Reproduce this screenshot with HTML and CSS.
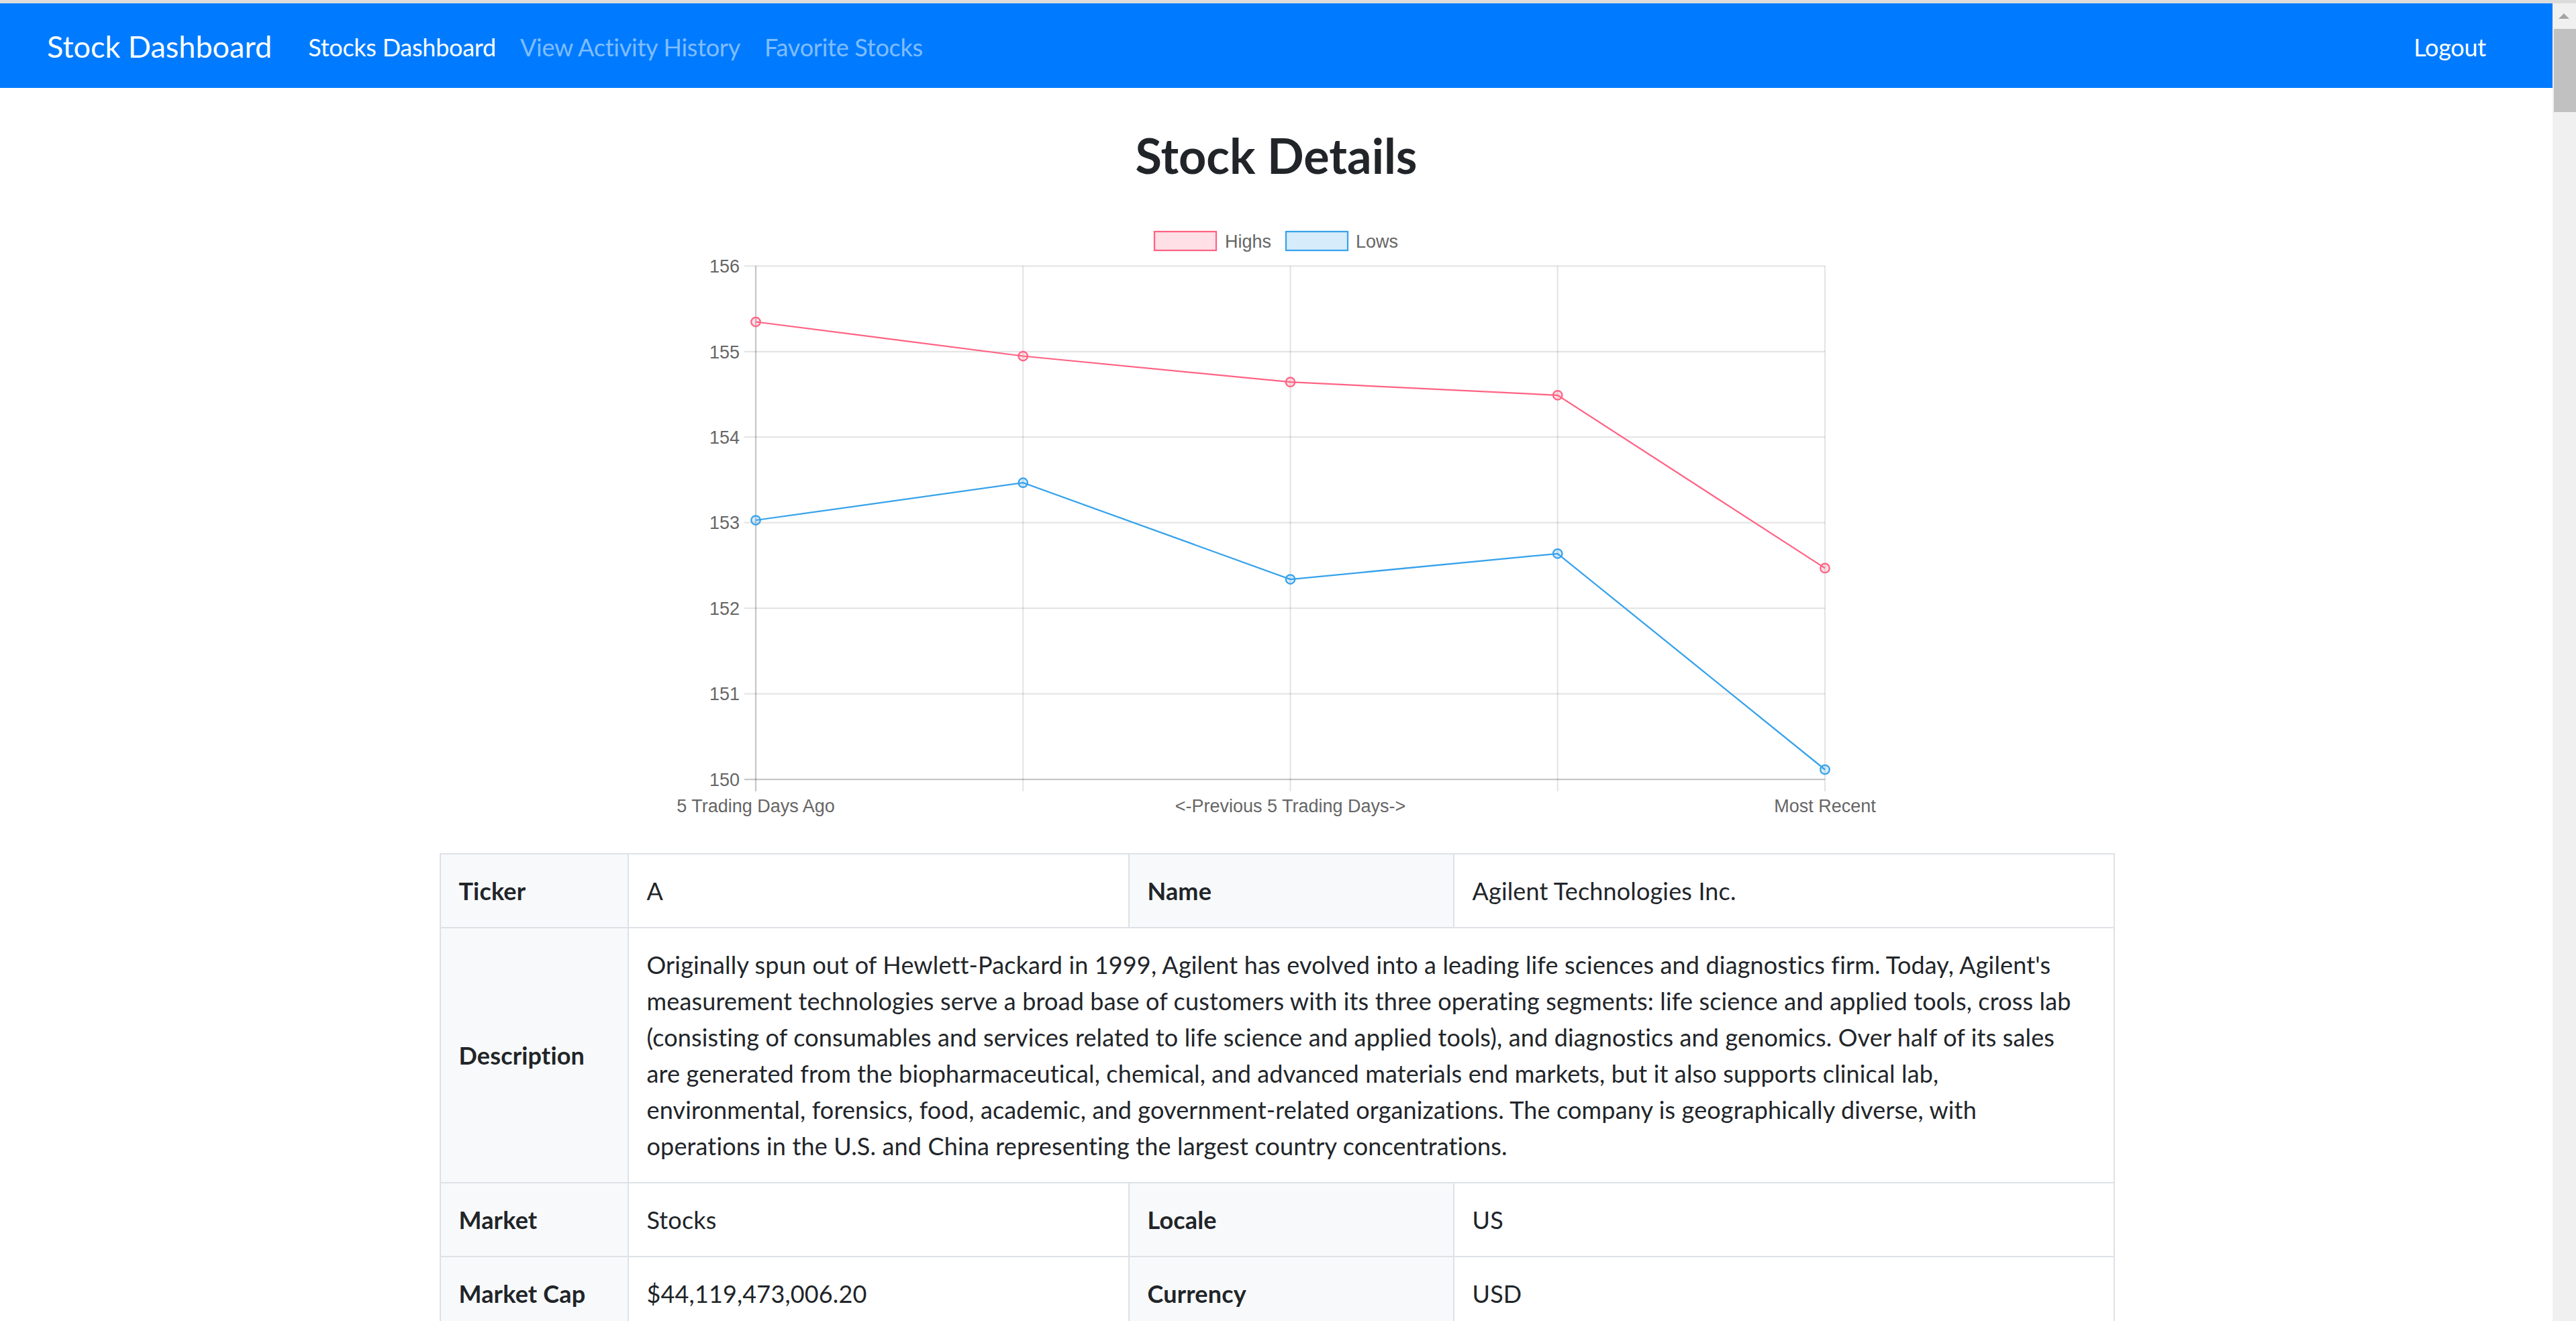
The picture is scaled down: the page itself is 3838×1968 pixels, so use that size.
FILE: index.html
```html
<!DOCTYPE html>
<html lang="en">
<head>
<meta charset="utf-8">
<title>Stock Details</title>
<link rel="stylesheet" href="styles.css">
</head>
<body>
<nav class="navbar">
  <div class="navbar-inner">
    <a class="brand" href="#">Stock Dashboard</a>
    <a class="nav-link active" href="#">Stocks Dashboard</a>
    <a class="nav-link" href="#">View Activity History</a>
    <a class="nav-link" href="#">Favorite Stocks</a>
    <a class="nav-link logout" href="#">Logout</a>
  </div>
</nav>

<main class="container">
  <h2 class="title">Stock Details</h2>

  <svg class="chart" width="1900" height="905" viewBox="0 0 1900 905" xmlns="http://www.w3.org/2000/svg">
    <!-- legend -->
    <rect x="768" y="25" width="92" height="28" fill="rgba(255,99,132,0.2)" stroke="rgb(255,99,132)" stroke-width="2.25"/>
    <text x="873" y="48.5" class="lbl">Highs</text>
    <rect x="964" y="25" width="92" height="28" fill="rgba(54,162,235,0.2)" stroke="rgb(54,162,235)" stroke-width="2.25"/>
    <text x="1068" y="48.5" class="lbl">Lows</text>

    <!-- horizontal grid -->
    <g stroke="rgba(0,0,0,0.1)" stroke-width="2.25">
      <line x1="157" y1="76.3" x2="1767" y2="76.3"/>
      <line x1="157" y1="203.75" x2="1767" y2="203.75"/>
      <line x1="157" y1="331.2" x2="1767" y2="331.2"/>
      <line x1="157" y1="458.65" x2="1767" y2="458.65"/>
      <line x1="157" y1="586.1" x2="1767" y2="586.1"/>
      <line x1="157" y1="713.55" x2="1767" y2="713.55"/>
    </g>
    <!-- vertical grid -->
    <g stroke="rgba(0,0,0,0.1)" stroke-width="2.25">
      <line x1="572.25" y1="76.3" x2="572.25" y2="859"/>
      <line x1="970.5" y1="76.3" x2="970.5" y2="859"/>
      <line x1="1368.75" y1="76.3" x2="1368.75" y2="859"/>
      <line x1="1767" y1="76.3" x2="1767" y2="859"/>
    </g>
    <g stroke="rgba(0,0,0,0.22)" stroke-width="2.25">
      <line x1="157" y1="841" x2="1767" y2="841"/>
      <line x1="174" y1="76.3" x2="174" y2="859"/>
    </g>

    <!-- y labels -->
    <g class="lbl" text-anchor="end">
      <text x="150" y="86">156</text>
      <text x="150" y="213.5">155</text>
      <text x="150" y="341">154</text>
      <text x="150" y="468.4">153</text>
      <text x="150" y="595.8">152</text>
      <text x="150" y="723.3">151</text>
      <text x="150" y="850.7">150</text>
    </g>
    <!-- x labels -->
    <g class="lbl" text-anchor="middle">
      <text x="174" y="890">5 Trading Days Ago</text>
      <text x="970.5" y="890">&lt;-Previous 5 Trading Days-&gt;</text>
      <text x="1767" y="890">Most Recent</text>
    </g>

    <!-- Highs -->
    <polyline fill="none" stroke="rgb(255,99,132)" stroke-width="2.25" points="174,159.5 572.25,210.5 970.5,249.2 1368.75,268.8 1767,526.4"/>
    <g fill="rgba(255,99,132,0.2)" stroke="rgb(255,99,132)" stroke-width="2.25">
      <circle cx="174" cy="159.5" r="6.75"/>
      <circle cx="572.25" cy="210.5" r="6.75"/>
      <circle cx="970.5" cy="249.2" r="6.75"/>
      <circle cx="1368.75" cy="268.8" r="6.75"/>
      <circle cx="1767" cy="526.4" r="6.75"/>
    </g>
    <!-- Lows -->
    <polyline fill="none" stroke="rgb(54,162,235)" stroke-width="2.25" points="174,455 572.25,399.2 970.5,543 1368.75,504.8 1767,826.5"/>
    <g fill="rgba(54,162,235,0.2)" stroke="rgb(54,162,235)" stroke-width="2.25">
      <circle cx="174" cy="455" r="6.75"/>
      <circle cx="572.25" cy="399.2" r="6.75"/>
      <circle cx="970.5" cy="543" r="6.75"/>
      <circle cx="1368.75" cy="504.8" r="6.75"/>
      <circle cx="1767" cy="826.5" r="6.75"/>
    </g>
  </svg>

  <table class="details">
    <colgroup>
      <col class="c1"><col class="c2"><col class="c3"><col class="c4">
    </colgroup>
    <tbody>
      <tr>
        <th>Ticker</th>
        <td>A</td>
        <th>Name</th>
        <td>Agilent Technologies Inc.</td>
      </tr>
      <tr>
        <th>Description</th>
        <td colspan="3">Originally spun out of Hewlett-Packard in 1999, Agilent has evolved into a leading life sciences and diagnostics firm. Today, Agilent's<br>measurement technologies serve a broad base of customers with its three operating segments: life science and applied tools, cross lab<br>(consisting of consumables and services related to life science and applied tools), and diagnostics and genomics. Over half of its sales<br>are generated from the biopharmaceutical, chemical, and advanced materials end markets, but it also supports clinical lab,<br>environmental, forensics, food, academic, and government-related organizations. The company is geographically diverse, with<br>operations in the U.S. and China representing the largest country concentrations.</td>
      </tr>
      <tr>
        <th>Market</th>
        <td>Stocks</td>
        <th>Locale</th>
        <td>US</td>
      </tr>
      <tr>
        <th>Market Cap</th>
        <td>$44,119,473,006.20</td>
        <th>Currency</th>
        <td>USD</td>
      </tr>
    </tbody>
  </table>
</main>

<div class="scrollbar">
  <div class="scroll-arrow"></div>
  <div class="scroll-thumb"></div>
</div>
</body>
</html>
```

FILE: styles.css
```css
html, body {
  overflow: hidden;
  height: 100%;
}

body {
  margin: 0;
  padding-right: 35px;
  border-top: 5px solid #dcdcdc;
  box-sizing: border-box;
  font-family: Lato, "Liberation Sans", sans-serif;
  color: #212529;
  background: #fff;
}

a {
  text-decoration: none;
}

.navbar {
  background: #007bff;
  padding: 20px 36px 16px;
}

.navbar-inner {
  display: flex;
  align-items: center;
  padding: 0 34px;
}

.brand {
  color: #fff;
  font-size: 45px;
  line-height: 67.5px;
  padding: 11.25px 0;
  margin-right: 36px;
}

.nav-link {
  color: rgba(255, 255, 255, 0.5);
  font-size: 36px;
  line-height: 54px;
  padding: 18px 18px;
  letter-spacing: -0.25px;
}

.nav-link.active {
  color: #fff;
}

.nav-link.logout {
  margin-left: auto;
  color: #fff;
  padding-right: 29px;
}

.container {
  width: 2494px;
  margin: 0 auto;
}

.title {
  margin: 57px 0 0;
  text-align: center;
  font-size: 72px;
  line-height: 1.2;
  font-weight: 700;
}

.chart {
  display: block;
  margin: 46px auto 0;
  width: 1900px;
  height: 905px;
}

.chart .lbl,
.chart .lbl text {
  font-family: "Liberation Sans", Arial, sans-serif;
  font-size: 27px;
  fill: #666;
}

.details {
  width: 2494px;
  margin-top: 46px;
  border-collapse: collapse;
  table-layout: fixed;
  font-size: 36px;
  line-height: 54px;
  letter-spacing: 0.15px;
}

.details .c1 { width: 280px; }
.details .c2 { width: 746px; }
.details .c3 { width: 484px; }
.details .c4 { width: 984px; }

.details th,
.details td {
  border: 2px solid #dee2e6;
  padding: 27px;
  vertical-align: middle;
  text-align: left;
}

.details th {
  background: #f8f9fa;
  font-weight: 700;
}

.scrollbar {
  position: fixed;
  top: 5px;
  right: 0;
  bottom: 0;
  width: 35px;
  background: #f0f0f0;
}

.scroll-arrow {
  position: absolute;
  top: 15px;
  left: 9px;
  width: 0;
  height: 0;
  border-left: 8.5px solid transparent;
  border-right: 8.5px solid transparent;
  border-bottom: 8.5px solid #a3a3a3;
}

.scroll-thumb {
  position: absolute;
  top: 38px;
  left: 2px;
  width: 33px;
  height: 124px;
  background: #c1c1c1;
}
```
